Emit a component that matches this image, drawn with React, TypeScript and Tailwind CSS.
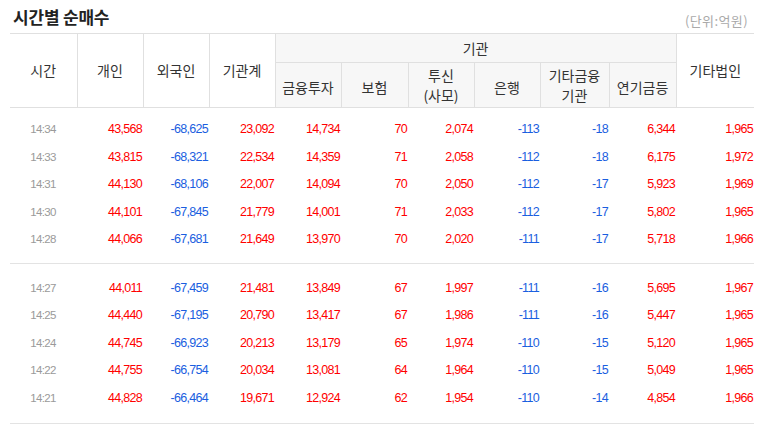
import React from "react";

type Row = [string, ...number[]];

const g1: Row[] = [
  ["14:34", 43568, -68625, 23092, 14734, 70, 2074, -113, -18, 6344, 1965],
  ["14:33", 43815, -68321, 22534, 14359, 71, 2058, -112, -18, 6175, 1972],
  ["14:31", 44130, -68106, 22007, 14094, 70, 2050, -112, -17, 5923, 1969],
  ["14:30", 44101, -67845, 21779, 14001, 71, 2033, -112, -17, 5802, 1965],
  ["14:28", 44066, -67681, 21649, 13970, 70, 2020, -111, -17, 5718, 1966],
];
const g2: Row[] = [
  ["14:27", 44011, -67459, 21481, 13849, 67, 1997, -111, -16, 5695, 1967],
  ["14:25", 44440, -67195, 20790, 13417, 67, 1986, -111, -16, 5447, 1965],
  ["14:24", 44745, -66923, 20213, 13179, 65, 1974, -110, -15, 5120, 1965],
  ["14:22", 44755, -66754, 20034, 13081, 64, 1964, -110, -15, 5049, 1965],
  ["14:21", 44828, -66464, 19671, 12924, 62, 1954, -110, -14, 4854, 1966],
];

const widths = [67, 66, 66, 66, 66, 67, 66, 66, 69, 67, 78];

const fmt = (n: number) => n.toLocaleString("en-US");

function Group({ rows, top, bottom }: { rows: Row[]; top: string; bottom: string }) {
  return (
    <tbody className="border-b border-[#e3e3e3]">
      <tr>
        <td colSpan={11} className={top}></td>
      </tr>
      {rows.map((r) => (
        <tr key={r[0]} className="h-[27.5px]">
          <td className="text-center text-[11.5px] text-[#9a9a9a] tracking-[-0.7px] p-0 pr-[1px]">{r[0]}</td>
          {(r.slice(1) as number[]).map((v, i) => (
            <td
              key={i}
              className={`text-right text-[12.5px] tracking-[-0.7px] p-0 pr-[1px] ${v < 0 ? "text-[#1a5ee0]" : "text-[#f00]"}`}
            >
              {fmt(v)}
            </td>
          ))}
        </tr>
      ))}
      <tr>
        <td colSpan={11} className={bottom}></td>
      </tr>
    </tbody>
  );
}

export default function App() {
  const th = "border border-[#e0e0e0] font-normal text-[14px] text-[#333] p-0 align-middle";
  return (
    <div className="w-[768px] h-[427px] bg-white overflow-hidden" style={{ fontFamily: '"Liberation Sans", "Noto Sans CJK KR", sans-serif' }}>
      <div className="flex items-end justify-between pl-[13px] pr-[20px] pt-[5px] h-[33px]">
        <h2 className="text-[17px] font-bold text-[#222] leading-[22px] pb-[5px] tracking-[-0.2px]" style={{ fontFamily: '"Noto Sans CJK KR", sans-serif' }}>
          시간별 순매수
        </h2>
        <span className="text-[13px] text-[#aaa] leading-[16px] pb-[4px] tracking-[0.4px]" style={{ fontFamily: '"Noto Sans CJK KR", sans-serif' }}>
          (단위:억원)
        </span>
      </div>
      <table className="ml-[10px] table-fixed border-collapse w-[744px]" style={{ fontFamily: '"Liberation Sans", "Noto Sans CJK KR", sans-serif' }}>
        <colgroup>
          {widths.map((w, i) => (
            <col key={i} style={{ width: w }} />
          ))}
        </colgroup>
        <thead style={{ fontFamily: '"Noto Sans CJK KR", sans-serif' }}>
          <tr className="h-[29px]">
            <th rowSpan={2} className={`${th} border-l-0`}>시간</th>
            <th rowSpan={2} className={th}>개인</th>
            <th rowSpan={2} className={th}>외국인</th>
            <th rowSpan={2} className={th}>기관계</th>
            <th colSpan={6} className={`${th} bg-[#f7f7f7]`}>기관</th>
            <th rowSpan={2} className={`${th} border-r-0`}>기타법인</th>
          </tr>
          <tr className="h-[45px]">
            <th className={`${th} bg-[#f7f7f7] pt-[4px]`}>금융투자</th>
            <th className={`${th} bg-[#f7f7f7] pt-[4px]`}>보험</th>
            <th className={`${th} bg-[#f7f7f7] leading-[20px]`}>투신<br />(사모)</th>
            <th className={`${th} bg-[#f7f7f7] pt-[4px]`}>은행</th>
            <th className={`${th} bg-[#f7f7f7] leading-[20px]`}>기타금융<br />기관</th>
            <th className={`${th} bg-[#f7f7f7] pt-[4px]`}>연기금등</th>
          </tr>
        </thead>
        <Group rows={g1} top="h-[8.5px] p-0" bottom="h-[10px] p-0" />
        <Group rows={g2} top="h-[11px] p-0" bottom="h-[11px] p-0" />
      </table>
    </div>
  );
}
